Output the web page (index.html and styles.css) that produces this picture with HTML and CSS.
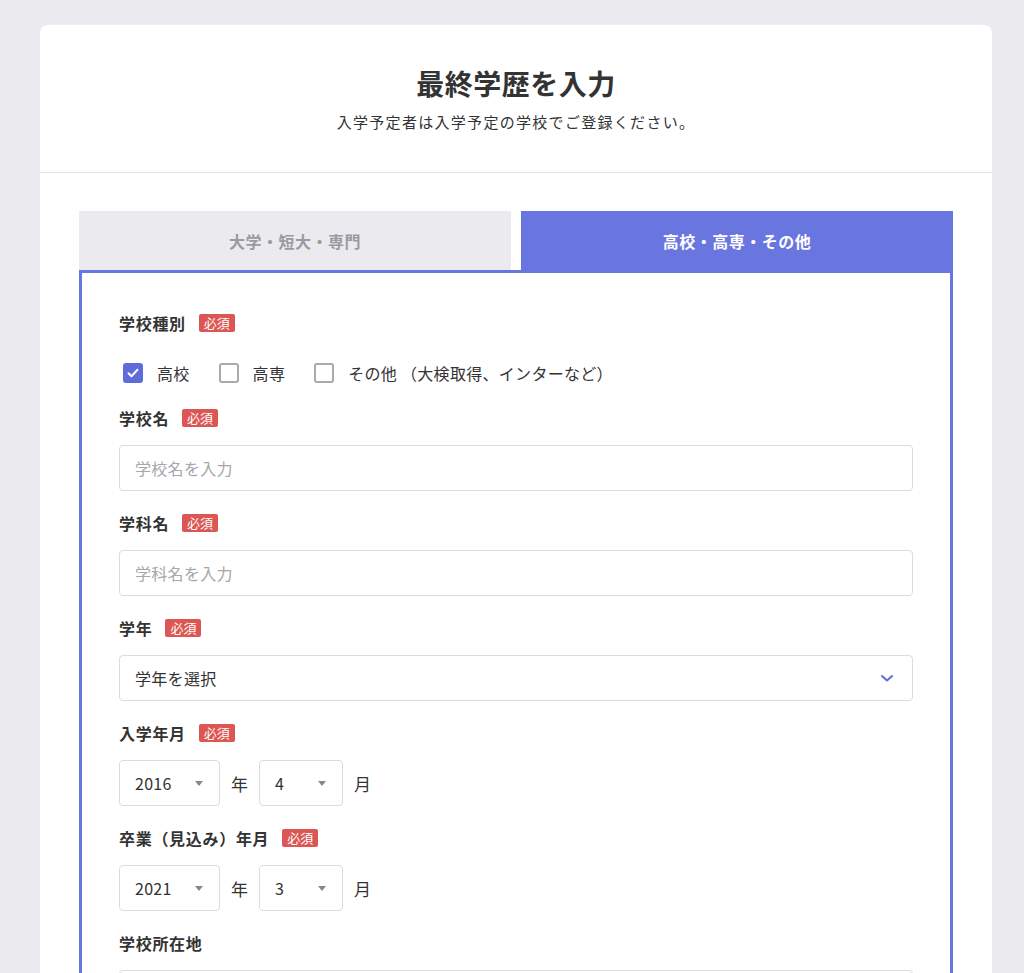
FILE: index.html
```html
<!DOCTYPE html>
<html lang="ja">
<head>
  <meta charset="UTF-8" />
  <meta name="viewport" content="width=device-width, initial-scale=1.0"/>
  <title>最終学歴を入力</title>
  <link rel="stylesheet" href="styles.css">
</head>
<body>

  <div class="card">

    <!-- HEADER -->
    <div class="card-head">
      <h1 class="title">最終学歴を入力</h1>
      <p class="lead">入学予定者は入学予定の学校でご登録ください。</p>
    </div>

    <div class="card-body">

      <!-- TABS -->
      <div class="tabs">
        <div class="tab">大学・短大・専門</div>
        <div class="tab is-active">高校・高専・その他</div>
      </div>

      <!-- FORM -->
      <div class="panel">

        <div class="label">学校種別<span class="badge">必須</span></div>
        <div class="checks">
          <label class="check is-checked">
            <span class="box">
              <svg width="14" height="14" viewBox="0 0 14 14"><path d="M2.5 7.2l3 3 6-6.4" fill="none" stroke="#fff" stroke-width="2" stroke-linecap="round" stroke-linejoin="round"/></svg>
            </span>高校
          </label>
          <label class="check"><span class="box"></span>高専</label>
          <label class="check"><span class="box"></span>その他 （大検取得、インターなど）</label>
        </div>

        <div class="label">学校名<span class="badge">必須</span></div>
        <div class="field placeholder">学校名を入力</div>

        <div class="label">学科名<span class="badge">必須</span></div>
        <div class="field placeholder">学科名を入力</div>

        <div class="label">学年<span class="badge">必須</span></div>
        <div class="field select">
          学年を選択
          <svg class="chevron" width="14" height="10" viewBox="0 0 14 10"><path d="M2 3l5 4.5L12 3" fill="none" stroke="#5f6bd9" stroke-width="2" stroke-linecap="round" stroke-linejoin="round"/></svg>
        </div>

        <div class="label">入学年月<span class="badge">必須</span></div>
        <div class="date-row">
          <div class="field mini year">2016<span class="caret"></span></div>
          <span class="unit">年</span>
          <div class="field mini month">4<span class="caret"></span></div>
          <span class="unit">月</span>
        </div>

        <div class="label">卒業（見込み）年月<span class="badge">必須</span></div>
        <div class="date-row">
          <div class="field mini year">2021<span class="caret"></span></div>
          <span class="unit">年</span>
          <div class="field mini month">3<span class="caret"></span></div>
          <span class="unit">月</span>
        </div>

        <div class="label">学校所在地</div>
        <div class="field placeholder"></div>

      </div>
    </div>
  </div>

</body>
</html>
```

FILE: styles.css
```css
body {
  margin: 0;
  background: #ececf0;
  font-family: "Noto Sans CJK JP", "Noto Sans", sans-serif;
  color: #333;
  font-size: 16px;
}

.card {
  margin: 25px 32px 0 40px;
  background: #fff;
  border-radius: 8px 8px 0 0;
  overflow: hidden;
}

.card-head {
  padding: 40px 0 40px;
  text-align: center;
  border-bottom: 1px solid #e3e3e8;
}

.title {
  margin: 0;
  font-size: 28px;
  line-height: 36px;
  font-weight: 700;
  color: #333;
  letter-spacing: 0.5px;
}

.lead {
  margin: 11px 0 0;
  font-size: 15px;
  line-height: 20px;
  letter-spacing: 1.3px;
}

.card-body {
  padding: 38px 39px 0;
}

.tabs {
  display: flex;
  gap: 10px;
}

.tab {
  flex: 1;
  height: 59px;
  display: flex;
  align-items: center;
  justify-content: center;
  background: #ebebef;
  color: #9a9aa0;
  font-weight: 700;
  font-size: 16px;
  letter-spacing: 0.5px;
}

.tab.is-active {
  background: #6a76e0;
  color: #fff;
}

.panel {
  border: 3px solid #6a76e0;
  border-bottom: none;
  padding: 40px 37px 40px;
  min-height: 700px;
}

.label {
  display: flex;
  align-items: center;
  font-weight: 700;
  font-size: 16px;
  line-height: 20px;
  letter-spacing: 0.7px;
  margin-bottom: 17px;
}

.badge {
  margin-left: 13px;
  background: #dc5753;
  color: #fff;
  font-weight: 400;
  font-size: 13px;
  line-height: 18px;
  letter-spacing: 0;
  padding: 0 5px;
  border-radius: 2px;
}

.checks {
  display: flex;
  align-items: center;
  height: 28px;
  margin: 26px 0 21px;
}

.check {
  display: flex;
  align-items: center;
  margin-right: 29px;
  margin-left: 4px;
  font-size: 16px;
  letter-spacing: 0.3px;
}

.check + .check {
  margin-left: 0;
}

.box {
  width: 20px;
  height: 20px;
  box-sizing: border-box;
  border: 2px solid #a9a9b0;
  border-radius: 3px;
  margin-right: 14px;
  display: flex;
  align-items: center;
  justify-content: center;
}

.check.is-checked .box {
  background: #5f6bd9;
  border-color: #5f6bd9;
}

.field {
  box-sizing: border-box;
  height: 46px;
  border: 1px solid #dcdce0;
  border-radius: 4px;
  padding: 0 15px;
  display: flex;
  align-items: center;
  font-size: 16px;
  letter-spacing: 0.3px;
  margin-bottom: 22px;
  position: relative;
}

.placeholder {
  color: #a6a6ad;
}

.select {
  justify-content: space-between;
  padding-right: 18px;
}

.date-row {
  display: flex;
  align-items: center;
  gap: 11px;
  margin-bottom: 22px;
}

.date-row .field {
  margin-bottom: 0;
}

.mini {
  justify-content: space-between;
  padding-right: 16px;
}

.year {
  width: 101px;
}

.month {
  width: 84px;
  margin-left: -1px;
}

.caret {
  width: 0;
  height: 0;
  border-left: 4px solid transparent;
  border-right: 4px solid transparent;
  border-top: 5px solid #888;
}

.unit {
  font-size: 17px;
  width: 18px;
}
```
